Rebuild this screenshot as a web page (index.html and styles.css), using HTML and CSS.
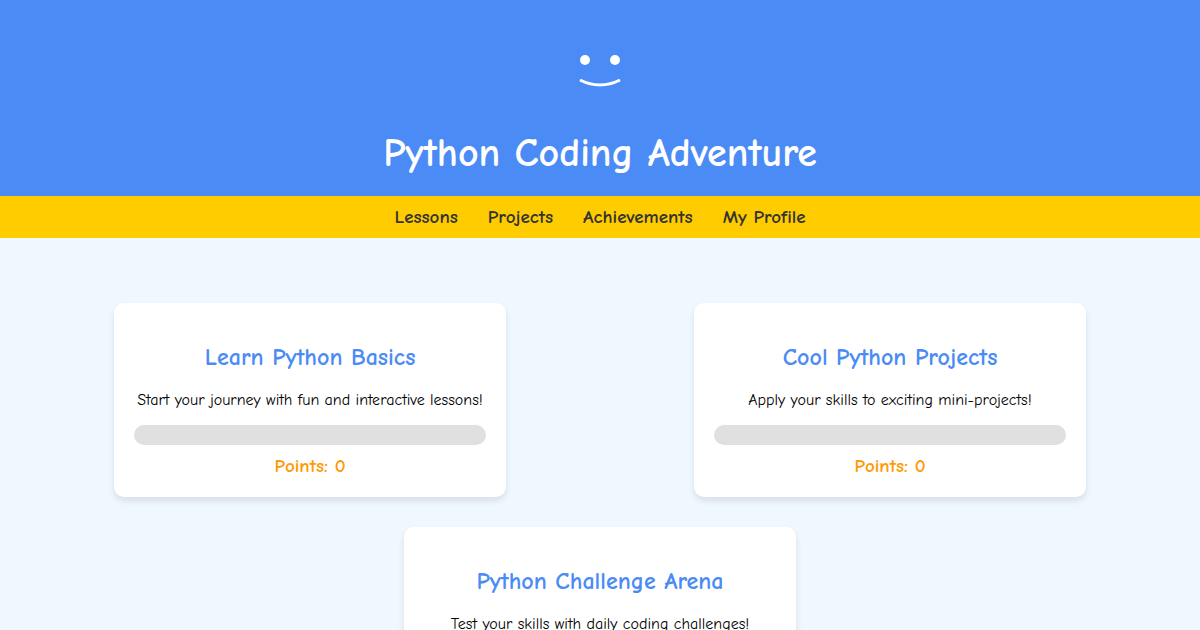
FILE: index.html
```html
<!DOCTYPE html>
<html lang="en">
<head>
<meta charset="UTF-8">
<meta name="viewport" content="width=device-width, initial-scale=1">
<title>Python Coding Adventure</title>
<link rel="stylesheet" href="styles.css">
</head>
<body>
<header class="header">
  <svg class="face" width="100" height="100" viewBox="0 0 100 100" aria-hidden="true">
    <circle cx="35" cy="40" r="5" fill="#fff"/>
    <circle cx="65" cy="40" r="5" fill="#fff"/>
    <path d="M30 60 Q50 70 70 60" fill="none" stroke="#fff" stroke-width="3"/>
  </svg>
  <h1 class="title">Python Coding Adventure</h1>
</header>
<nav class="nav">
  <a class="nav-link" href="#lessons">Lessons</a>
  <a class="nav-link" href="#projects">Projects</a>
  <a class="nav-link" href="#achievements">Achievements</a>
  <a class="nav-link" href="#profile">My Profile</a>
</nav>
<main class="cards">
  <section class="card">
    <h2 class="card-title">Learn Python Basics</h2>
    <p class="card-text">Start your journey with fun and interactive lessons!</p>
    <div class="progress" role="progressbar" aria-valuenow="0" aria-label="Learn Python Basics"></div>
    <div class="points">Points: 0</div>
  </section>
  <section class="card">
    <h2 class="card-title">Cool Python Projects</h2>
    <p class="card-text">Apply your skills to exciting mini-projects!</p>
    <div class="progress" role="progressbar" aria-valuenow="0" aria-label="Cool Python Projects"></div>
    <div class="points">Points: 0</div>
  </section>
  <section class="card">
    <h2 class="card-title">Python Challenge Arena</h2>
    <p class="card-text">Test your skills with daily coding challenges!</p>
    <div class="progress" role="progressbar" aria-valuenow="0" aria-label="Python Challenge Arena"></div>
    <div class="points">Points: 0</div>
  </section>
</main>
</body>
</html>
```
FILE: styles.css
```css
* {
  box-sizing: border-box;
}

body {
  margin: 0;
  background: #f0f8ff;
  color: #000;
  font-family: "Comic Neue", "Comic Sans MS", Lato, sans-serif;
  font-size: 16px;
  text-align: center;
}

.header {
  display: flex;
  flex-direction: column;
  align-items: center;
  gap: 10px;
  padding: 20px;
  background: #4b8bf5;
  color: #fff;
}

.title {
  margin: 0;
  font-size: 40px;
  line-height: 46px;
  font-weight: 700;
}

.nav {
  display: flex;
  flex-wrap: wrap;
  justify-content: center;
  gap: 0 30px;
  padding: 10px;
  background: #ffcc00;
}

.nav-link {
  color: #333;
  font-size: 19px;
  line-height: 22px;
  font-weight: 700;
  text-decoration: none;
}

.cards {
  display: flex;
  flex-wrap: wrap;
  justify-content: space-around;
  padding: 50px 20px;
}

.card {
  width: 392px;
  max-width: 100%;
  margin: 15px;
  padding: 20px;
  background: #fff;
  border-radius: 10px;
  box-shadow: 0 4px 6px rgba(0, 0, 0, 0.1);
}

.card-title {
  margin: 20px 0;
  color: #4b8bf5;
  font-size: 24px;
  line-height: 28px;
  font-weight: 700;
}

.card-text {
  margin: 0 0 16px;
  line-height: 18px;
}

.progress {
  height: 20px;
  margin-bottom: 10px;
  background: #e0e0e0;
  border-radius: 10px;
}

.points {
  color: #ff9900;
  font-size: 19px;
  line-height: 22px;
  font-weight: 700;
}
```
